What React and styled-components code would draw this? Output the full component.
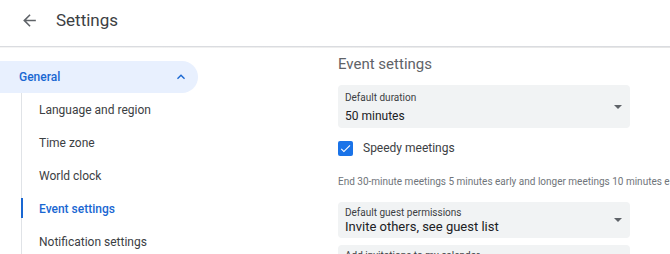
import React from "react";
import styled, { createGlobalStyle } from "styled-components";

const Global = createGlobalStyle`
  html, body { margin: 0; padding: 0; background: #fff; }
  body { font-family: Roboto, "Noto Sans", Arial, sans-serif; color: #3c4043; overflow: hidden; }
  * { box-sizing: border-box; }
`;

const Page = styled.div`
  width: 670px;
  height: 254px;
  overflow: hidden;
  display: flex;
  flex-direction: column;
`;

const Header = styled.header`
  height: 47px;
  display: flex;
  align-items: center;
  padding-left: 19px;
  gap: 17px;
  border-bottom: 1px solid #dadce0;
  position: relative;
  &::after {
    content: "";
    position: absolute;
    left: 0; right: 0; bottom: -2px;
    height: 1px;
    background: linear-gradient(to right, #f4f4f4, #e6e6e6);
  }
`;

const BackButton = styled.button`
  width: 20px;
  height: 20px;
  padding: 0;
  border: 0;
  background: none;
  display: flex;
  align-items: center;
  justify-content: center;
  color: #5f6368;
  margin-top: -6px;
`;

const Title = styled.h1`
  margin: 0;
  font-size: 17px;
  font-weight: 400;
  color: #3c4043;
  margin-top: -6px;
`;

const Body = styled.div`
  flex: 1;
  display: flex;
  min-height: 0;
`;

const Sidebar = styled.nav`
  width: 198px;
  padding-top: 14px;
  flex-shrink: 0;
`;

const SectionHead = styled.div`
  height: 32px;
  display: flex;
  align-items: center;
  justify-content: space-between;
  padding: 0 9px 0 19px;
  background: #e8f0fe;
  border-radius: 0 16px 16px 0;
  color: #1967d2;
  font-size: 12px;
  font-weight: 500;
`;

const SubList = styled.ul`
  list-style: none;
  margin: 0 0 0 21px;
  padding: 0;
  border-left: 1px solid #e0e3e7;
`;

const SubItem = styled.li`
  height: 33px;
  display: flex;
  align-items: center;
  padding-left: 17px;
  font-size: 12px;
  color: ${(p) => (p.$active ? "#1967d2" : "#3c4043")};
  font-weight: ${(p) => (p.$active ? 500 : 400)};
  position: relative;
  &::before {
    content: "";
    display: ${(p) => (p.$active ? "block" : "none")};
    position: absolute;
    left: -1px;
    top: 6px;
    width: 2px;
    height: 20px;
    background: #1967d2;
  }
`;

const Content = styled.main`
  margin-left: 140px;
  padding-top: 7px;
  width: 292px;
  flex-shrink: 0;
`;

const SectionTitle = styled.h2`
  margin: 0 0 11px;
  font-size: 15px;
  line-height: 20px;
  font-weight: 400;
  color: #5f6368;
`;

const Select = styled.div`
  background: #f1f3f4;
  border-radius: 4px;
  height: ${(p) => p.$h}px;
  padding: ${(p) => p.$pt}px 12px 0 7px;
  position: relative;
  margin-bottom: ${(p) => p.$mb || 0}px;
`;

const SelectLabel = styled.div`
  font-size: 10px;
  line-height: 13px;
  color: #3c4043;
`;

const SelectValue = styled.div`
  font-size: ${(p) => p.$fs || 12}px;
  line-height: ${(p) => p.$lh || 16}px;
  margin-top: ${(p) => p.$mt || 0}px;
  color: #202124;
`;

const Caret = styled.span`
  position: absolute;
  right: 8px;
  top: 50%;
  margin-top: -2px;
  width: 0;
  height: 0;
  border-left: 4px solid transparent;
  border-right: 4px solid transparent;
  border-top: 4px solid #5f6368;
`;

const CheckRow = styled.label`
  display: flex;
  align-items: center;
  gap: 10px;
  height: 16px;
  margin-top: 12px;
  font-size: 12px;
  color: #3c4043;
`;

const CheckBox = styled.span`
  width: 15px;
  height: 15px;
  border-radius: 2px;
  background: #1a73e8;
  display: flex;
  align-items: center;
  justify-content: center;
`;

const Hint = styled.p`
  margin: 19px 0 13px;
  font-size: 10px;
  line-height: 14px;
  color: #70757a;
  white-space: nowrap;
`;

export default function App() {
  return (
    <Page>
      <Global />
      <Header>
        <BackButton aria-label="Back">
          <svg width="19" height="19" viewBox="0 0 24 24">
            <path d="M20 11H7.83l5.59-5.59L12 4l-8 8 8 8 1.41-1.41L7.83 13H20v-2z" fill="#5f6368" />
          </svg>
        </BackButton>
        <Title>Settings</Title>
      </Header>
      <Body>
        <Sidebar>
          <SectionHead>
            <span>General</span>
            <svg width="16" height="16" viewBox="0 0 24 24">
              <path d="M7.41 15.41L12 10.83l4.59 4.58L18 14l-6-6-6 6z" fill="#1967d2" />
            </svg>
          </SectionHead>
          <SubList>
            <SubItem>Language and region</SubItem>
            <SubItem>Time zone</SubItem>
            <SubItem>World clock</SubItem>
            <SubItem $active>Event settings</SubItem>
            <SubItem>Notification settings</SubItem>
          </SubList>
        </Sidebar>
        <Content>
          <SectionTitle>Event settings</SectionTitle>
          <Select $h={43} $pt={6}>
            <SelectLabel>Default duration</SelectLabel>
            <SelectValue $mt={4}>50 minutes</SelectValue>
            <Caret />
          </Select>
          <CheckRow>
            <CheckBox>
              <svg width="13" height="13" viewBox="0 0 24 24">
                <path d="M9 16.17L4.83 12l-1.42 1.41L9 19 21 7l-1.41-1.41z" fill="#fff" />
              </svg>
            </CheckBox>
            Speedy meetings
          </CheckRow>
          <Hint>End 30-minute meetings 5 minutes early and longer meetings 10 minutes early</Hint>
          <Select $h={36} $pt={4} $mb={7}>
            <SelectLabel>Default guest permissions</SelectLabel>
            <SelectValue $fs={13} $lh={15}>Invite others, see guest list</SelectValue>
            <Caret />
          </Select>
          <Select $h={36} $pt={4}>
            <SelectLabel>Add invitations to my calendar</SelectLabel>
          </Select>
        </Content>
      </Body>
    </Page>
  );
}
